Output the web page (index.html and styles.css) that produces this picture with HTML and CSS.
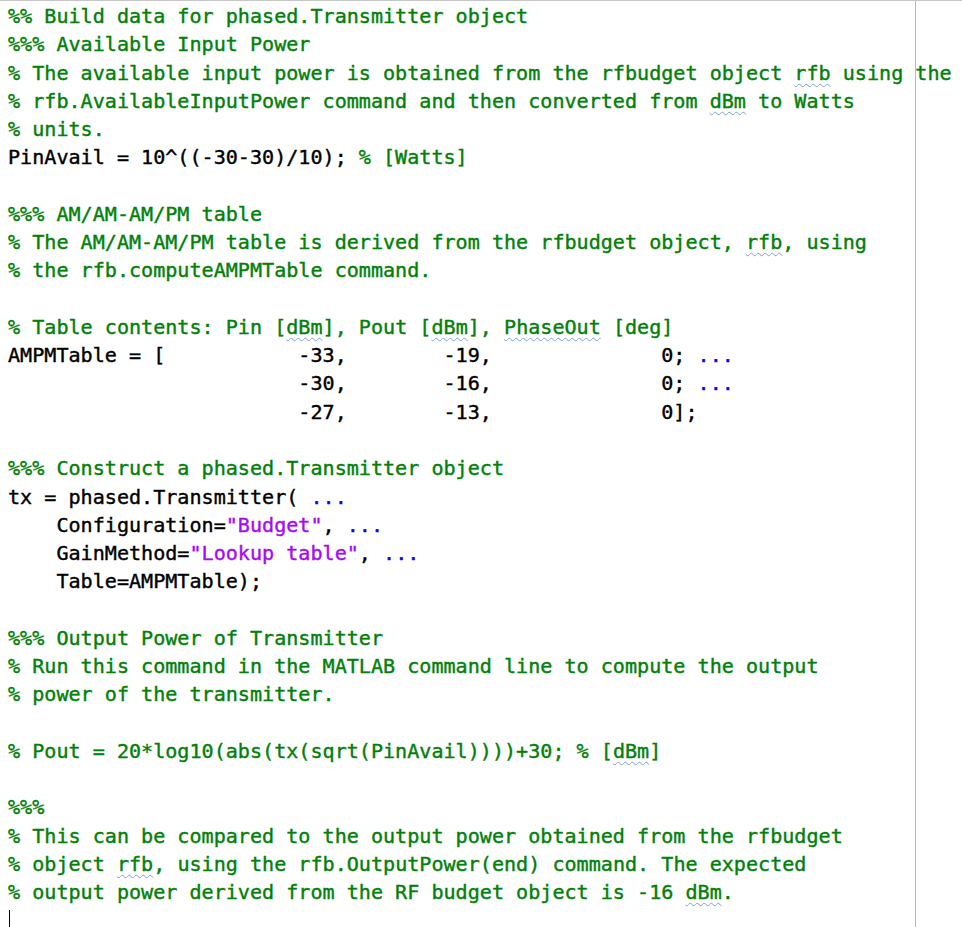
FILE: index.html
```html
<!DOCTYPE html>
<html>
<head>
<meta charset="utf-8">
<link rel="stylesheet" href="styles.css">
</head>
<body>
<div class="editor">
<div class="margin-line"></div>
<pre class="code"><span class="c">%% Build data for phased.Transmitter object</span>
<span class="c">%%% Available Input Power</span>
<span class="c">% The available input power is obtained from the rfbudget object <span class="sq">rfb</span> using the</span>
<span class="c">% rfb.AvailableInputPower command and then converted from <span class="sq">dBm</span> to Watts</span>
<span class="c">% units.</span>
PinAvail = 10^((-30-30)/10); <span class="c">% [Watts]</span>

<span class="c">%%% AM/AM-AM/PM table</span>
<span class="c">% The AM/AM-AM/PM table is derived from the rfbudget object, <span class="sq">rfb</span>, using</span>
<span class="c">% the rfb.computeAMPMTable command.</span>

<span class="c">% Table contents: Pin [<span class="sq">dBm</span>], Pout [<span class="sq">dBm</span>], <span class="sq">PhaseOut</span> [deg]</span>
AMPMTable = [           -33,        -19,              0; <span class="e">...</span>
                        -30,        -16,              0; <span class="e">...</span>
                        -27,        -13,              0];

<span class="c">%%% Construct a phased.Transmitter object</span>
tx = phased.Transmitter( <span class="e">...</span>
    Configuration=<span class="s">"Budget"</span>, <span class="e">...</span>
    GainMethod=<span class="s">"Lookup table"</span>, <span class="e">...</span>
    Table=AMPMTable);

<span class="c">%%% Output Power of Transmitter</span>
<span class="c">% Run this command in the MATLAB command line to compute the output</span>
<span class="c">% power of the transmitter.</span>

<span class="c">% Pout = 20*log10(abs(tx(sqrt(PinAvail))))+30; % [<span class="sq">dBm</span>]</span>

<span class="c">%%%</span>
<span class="c">% This can be compared to the output power obtained from the rfbudget</span>
<span class="c">% object <span class="sq">rfb</span>, using the rfb.OutputPower(end) command. The expected</span>
<span class="c">% output power derived from the RF budget object is -16 <span class="sq">dBm</span>.</span>
<span class="cursor"></span></pre>
</div>
</body>
</html>
```
FILE: styles.css
```css
html, body {
  margin: 0;
  padding: 0;
  background: #ffffff;
}
.editor {
  position: relative;
  width: 962px;
  height: 927px;
  overflow: hidden;
  border-top: 1px solid #c6c6c6;
  box-sizing: border-box;
}
.margin-line {
  position: absolute;
  left: 915px;
  top: 0;
  width: 1px;
  height: 100%;
  background: #b9b9b9;
}
.code {
  margin: 0;
  padding: 1px 0 0 8px;
  font-family: "DejaVu Sans Mono", "Liberation Mono", monospace;
  font-size: 20.1px;
  line-height: 28.26px;
  color: #000000;
  white-space: pre;
  -webkit-text-stroke: 0.4px currentColor;
}
.c { color: #028009; }
.s { color: #a709f5; }
.e { color: #0e00ff; }
.sq {
  text-decoration: underline wavy #7ea0d6;
  text-decoration-thickness: 1px;
  text-underline-offset: 3px;
}
.cursor {
  display: inline-block;
  width: 1px;
  height: 22px;
  background: #000;
  vertical-align: -4px;
  margin-left: 1px;
}
```
